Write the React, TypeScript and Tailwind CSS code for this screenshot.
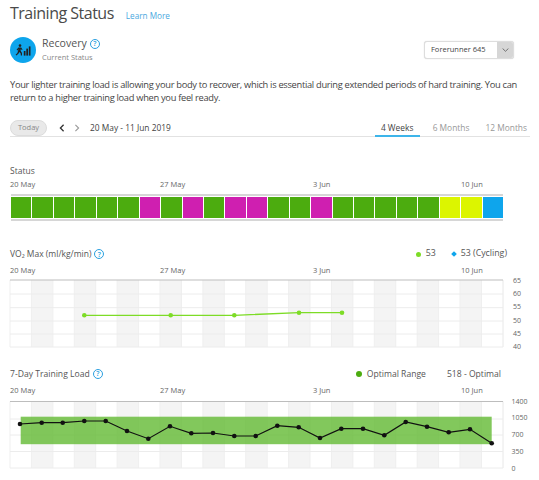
import React from "react";

const G = "#4cac0f", M = "#cf1fb0", Y = "#dcf500", B = "#0ea5ec";
const status = [G,G,G,G,G,G,M,G,M,G,M,M,G,G,M,G,G,G,G,G,Y,Y,B];
const DAY = 21.43;
const days = Array.from({ length: 23 }, (_, i) => i);
const dates = [
  { label: "20 May", cls: "w-[150px]" },
  { label: "27 May", cls: "w-[153px]" },
  { label: "3 Jun", cls: "w-[148px]" },
  { label: "10 Jun", cls: "" },
];

const loadPts: [number, number][] = [
  [20,424],[41.7,422.7],[62.7,422.7],[84.3,421],[105.7,421],[127,431],[148.3,438.7],[170,426.3],
  [191.3,433.3],[213,433],[234.3,436],[255.7,436],[277.3,425.7],[298.7,427.3],[320,438],[341.3,428.7],
  [363,428.7],[384.3,435.3],[405.7,422],[427,426.7],[448.7,432.3],[470,429.3],[491.7,443.3],
];
const voPts: [number, number][] = [[84.3,315.3],[170.7,315.3],[234.3,315.3],[299,312.7],[342,312.7]];

function Help({ size = 11 }: { size?: number }) {
  return (
    <span
      className="inline-flex items-center justify-center rounded-full border-[1.5px] border-[#2a9fe0] text-[#2a9fe0] font-semibold leading-none shrink-0"
      style={{ width: size, height: size, fontSize: size - 3 }}
    >
      ?
    </span>
  );
}

function Grid({ height, top, lines }: { height: number; top: number; lines: number[] }) {
  return (
    <>
      {days.filter((i) => i % 2 === 1).map((i) => (
        <rect key={i} x={10 + i * DAY} y={top} width={DAY} height={height} fill="#f4f4f4" />
      ))}
      {days.map((i) => (
        <line key={i} x1={10 + i * DAY} x2={10 + i * DAY} y1={top} y2={top + height} stroke="#efefef" strokeWidth="1" />
      ))}
      <line x1={503} x2={503} y1={top} y2={top + height} stroke="#e8e8e8" />
      {lines.map((y) => (
        <line key={y} x1="10" x2="503" y1={y} y2={y} stroke="#ececec" />
      ))}
      <line x1="10" x2="503" y1={top} y2={top} stroke="#bdbdbd" strokeWidth="1" />
    </>
  );
}

function DateRow({ className = "" }: { className?: string }) {
  return (
    <div className={`flex pl-[10px] text-[7.5px] text-[#666] leading-[10px] ${className}`}>
      {dates.map((d) => (
        <span key={d.label} className={d.cls}>{d.label}</span>
      ))}
    </div>
  );
}

function Axis({ labels, className = "" }: { labels: string[]; className?: string }) {
  return (
    <div className={`flex flex-col justify-between w-[30px] text-[7px] leading-[10px] text-[#666] ${className}`}>
      {labels.map((l) => <span key={l}>{l}</span>)}
    </div>
  );
}

export default function App() {
  return (
    <div
      className="w-[539px] h-[480px] overflow-hidden bg-white text-[#555]"
      style={{ fontFamily: '"Open Sans", sans-serif' }}
    >
      {/* Header */}
      <div className="flex items-baseline pl-[10px] h-[28px]">
        <h1 className="text-[16px] tracking-[-0.5px] font-normal leading-[27px] text-[#4a4a4a]">Training Status</h1>
        <a className="ml-[12px] text-[8.2px] text-[#4aa8e0]">Learn More</a>
      </div>

      {/* Status summary */}
      <div className="flex items-start justify-between pl-[10px] pr-[25px] mt-[8px] h-[37px]">
        <div className="flex items-center gap-[6px]">
          <div className="w-[26px] h-[26px] rounded-full bg-[#0ea5ec] flex items-center justify-center">
            <svg width="16" height="12" viewBox="0 0 16 12" fill="#222">
              <circle cx="5" cy="1.6" r="1.3" />
              <path d="M3.4 3.4 L6.2 3.4 L7.6 5.4 L6.8 6 L5.8 4.9 L5.6 6.8 L7 9 L7 11.6 L5.8 11.6 L5.7 9.4 L4.5 8 L3.4 9.8 L1.4 11.6 L0.6 10.8 L2.4 9 L3.6 5 L2.4 6.4 L1.6 5.8 Z" />
              <rect x="8.8" y="7" width="1.7" height="4.6" />
              <rect x="11.3" y="4.6" width="1.7" height="7" />
              <rect x="13.8" y="2.4" width="1.7" height="9.2" />
            </svg>
          </div>
          <div className="flex flex-col">
            <div className="flex items-center gap-[3px] text-[10.6px] leading-[15px] text-[#555]">
              Recovery <Help size={10} />
            </div>
            <div className="text-[7.5px] leading-[11px] text-[#888] mt-[1px]">Current Status</div>
          </div>
        </div>
        <div className="mt-[5px] flex w-[90px] h-[18px] rounded-[3px] border border-[#ddd] bg-white shadow-[0_0_1px_#ccc] overflow-hidden">
          <div className="flex-1 flex items-center pl-[6px] text-[7.5px] text-[#444]">Forerunner 645</div>
          <div className="w-[16px] bg-[#d6d6d6] flex items-center justify-center">
            <svg width="7" height="4" viewBox="0 0 7 4" fill="none" stroke="#666" strokeWidth="0.9"><path d="M0.6 0.5 L3.5 3.3 L6.4 0.5" /></svg>
          </div>
        </div>
      </div>

      {/* Description */}
      <p className="pl-[10px] pr-[15px] mt-[4.5px] text-[9.3px] tracking-[-0.3px] leading-[13px] text-[#444]">
        Your lighter training load is allowing your body to recover, which is essential during extended periods of hard training. You can return to a higher training load when you feel ready.
      </p>

      {/* Toolbar */}
      <div className="mx-[10px] mt-[16.5px] h-[17px] w-[520px] flex items-center border-b border-[#e2e2e2] relative">
        <button className="w-[37px] h-[16px] rounded-full bg-[#e9e9e9] border border-[#dcdcdc] text-[7.5px] text-[#888]">Today</button>
        <svg className="ml-[12px]" width="6" height="8" viewBox="0 0 6 8" fill="none" stroke="#333" strokeWidth="1.3"><path d="M4.6 0.8 L1.4 4 L4.6 7.2" /></svg>
        <svg className="ml-[9px]" width="6" height="8" viewBox="0 0 6 8" fill="none" stroke="#999" strokeWidth="1.1"><path d="M1.4 0.8 L4.6 4 L1.4 7.2" /></svg>
        <span className="ml-[10px] text-[8.4px] text-[#444]">20 May - 11 Jun 2019</span>
        <div className="ml-auto flex h-[17px] text-[8.4px] leading-[15px] text-[#999]">
          <span className="w-[45px] mr-[13px] text-center text-[#444] border-b-2 border-[#3db5ea]">4 Weeks</span>
          <span className="mr-[16px]">6 Months</span>
          <span className="mr-[3px]">12 Months</span>
        </div>
      </div>

      {/* Status row */}
      <div className="pl-[10px] mt-[26.5px] text-[8.5px] leading-[13px] text-[#555]">Status</div>
      <DateRow className="mt-[2.5px]" />
      <div className="ml-[11px] w-[492px] h-[27px] mt-[5px] border-y-2 border-[#d6d6d6] flex gap-[1px] py-[1px] bg-white">
        {status.map((c, i) => (
          <div key={i} className="flex-1" style={{ background: c }} />
        ))}
      </div>

      {/* VO2 */}
      <div className="flex items-center justify-between pl-[10px] pr-[32px] mt-[26.5px] h-[13px] text-[8.5px]">
        <div className="flex items-center gap-[3px]">VO₂ Max (ml/kg/min) <Help size={10} /></div>
        <div className="flex items-center text-[8.8px]">
          <span className="w-[5px] h-[5px] rounded-full bg-[#7ddc26]" />
          <span className="ml-[5px]">53</span>
          <span className="ml-[16px] w-[4px] h-[4px] rotate-45 bg-[#0ea5ec]" />
          <span className="ml-[5px]">53 (Cycling)</span>
        </div>
      </div>
      <DateRow className="mt-[4.5px]" />
      <div className="flex mt-[2px] h-[72px]">
        <svg width="506" height="72" viewBox="0 277 506 72" className="shrink-0">
          <Grid top={280} height={67} lines={[294, 307.7, 321, 334, 347]} />
          <polyline points={voPts.map((p) => p.join(",")).join(" ")} fill="none" stroke="#7ddc26" strokeWidth="1.3" />
          {voPts.map((p, i) => <circle key={i} cx={p[0]} cy={p[1]} r="2.3" fill="#7ddc26" />)}
        </svg>
        <Axis labels={["65","60","55","50","45","40"]} className="pl-[7px] -mt-[1px] h-[76px]" />
      </div>

      {/* Load */}
      <div className="flex items-center justify-between pl-[10px] pr-[38px] mt-[18.5px] h-[13px] text-[8.6px]">
        <div className="flex items-center gap-[3px]">7-Day Training Load <Help size={10} /></div>
        <div className="flex items-center">
          <span className="w-[6px] h-[6px] rounded-full bg-[#4cac0f]" />
          <span className="ml-[5px]">Optimal Range</span>
          <span className="ml-[21px]">518 - Optimal</span>
        </div>
      </div>
      <DateRow className="mt-[4.5px]" />
      <div className="flex mt-[4px] h-[72px]">
        <svg width="506" height="72" viewBox="0 399 506 72" className="shrink-0">
          <Grid top={401.5} height={66.5} lines={[419, 435, 451.5, 468]} />
          <rect x="20.7" y="416.7" width="471" height="27.5" fill="#5fb82e" fillOpacity="0.78" />
          <polyline points={loadPts.map((p) => p.join(",")).join(" ")} fill="none" stroke="#111" strokeWidth="1.2" />
          {loadPts.map((p, i) => <circle key={i} cx={p[0]} cy={p[1]} r="2.3" fill="#111" />)}
        </svg>
        <Axis labels={["1400","1050","700","350","0"]} className="pl-[5.5px] -mt-[2.5px] h-[77px]" />
      </div>
    </div>
  );
}
